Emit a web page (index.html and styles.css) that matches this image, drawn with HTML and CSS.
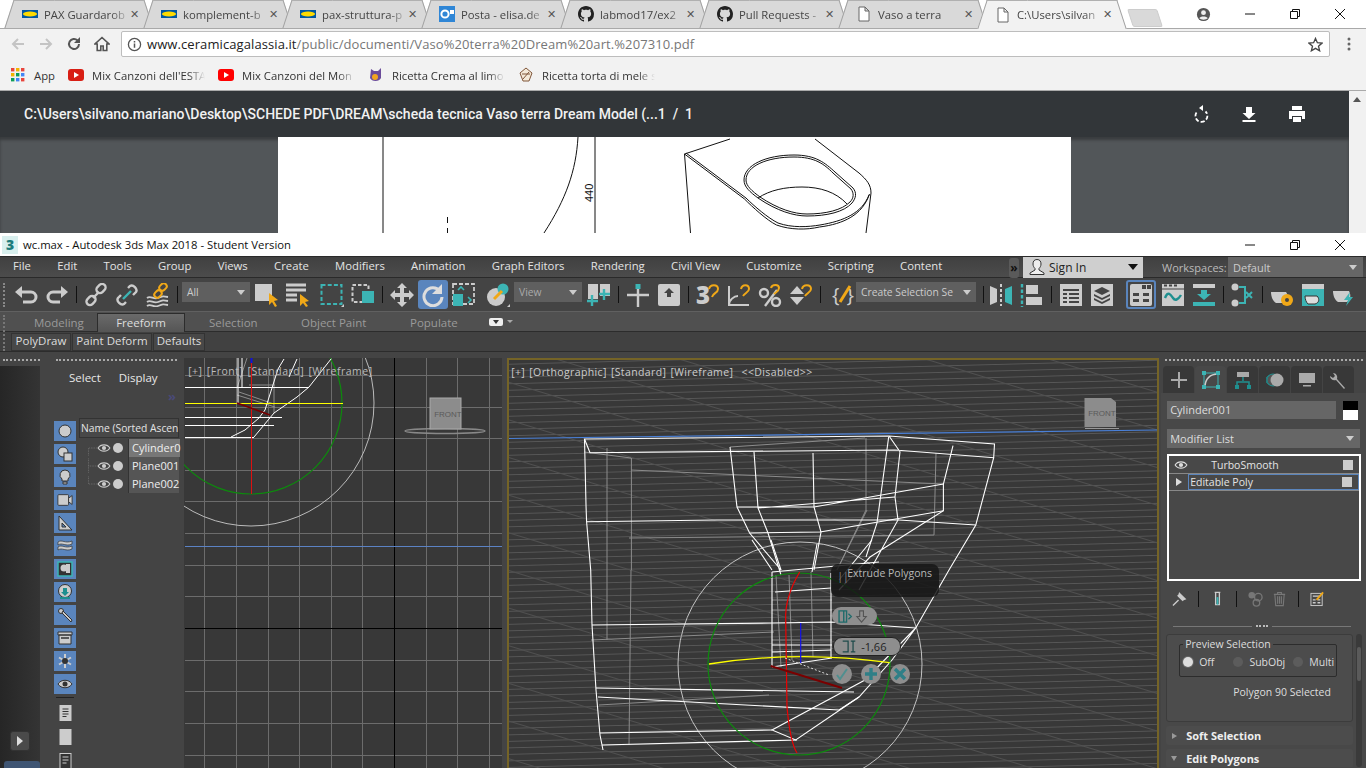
FILE: index.html
```html
<!DOCTYPE html>
<html lang="it">
<head>
<meta charset="utf-8">
<title>wc.max - Autodesk 3ds Max 2018</title>
<link rel="stylesheet" href="styles.css">
</head>
<body>
<section class="chrome">
  <div class="tabstrip">
    <div class="tab"><svg class="fav" viewBox="0 0 16 8"><rect width="16" height="8" y="0" fill="#0058a3"/><ellipse cx="8" cy="4" rx="7" ry="2.6" fill="#ffdb00"/></svg><span class="tab-title">PAX Guardarob</span><span class="x">✕</span></div>
    <div class="tab"><svg class="fav" viewBox="0 0 16 8"><rect width="16" height="8" fill="#0058a3"/><ellipse cx="8" cy="4" rx="7" ry="2.6" fill="#ffdb00"/></svg><span class="tab-title">komplement-b</span><span class="x">✕</span></div>
    <div class="tab"><svg class="fav" viewBox="0 0 16 8"><rect width="16" height="8" fill="#0058a3"/><ellipse cx="8" cy="4" rx="7" ry="2.6" fill="#ffdb00"/></svg><span class="tab-title">pax-struttura-p</span><span class="x">✕</span></div>
    <div class="tab"><svg class="fav fav-sq" viewBox="0 0 16 16"><rect width="16" height="16" fill="#2f86d6"/><circle cx="6" cy="8" r="3.6" fill="none" stroke="#fff" stroke-width="2"/><path d="M11 4h4v4h-4z" fill="#fff"/></svg><span class="tab-title">Posta - elisa.de</span><span class="x">✕</span></div>
    <div class="tab"><svg class="fav fav-sq" viewBox="0 0 16 16"><path fill="#222" d="M8 0C3.58 0 0 3.58 0 8c0 3.54 2.29 6.53 5.47 7.59.4.07.55-.17.55-.38 0-.19-.01-.82-.01-1.49-2.01.37-2.53-.49-2.69-.94-.09-.23-.48-.94-.82-1.13-.28-.15-.68-.52-.01-.53.63-.01 1.08.58 1.23.82.72 1.21 1.87.87 2.33.66.07-.52.28-.87.51-1.07-1.78-.2-3.64-.89-3.64-3.95 0-.87.31-1.59.82-2.15-.08-.2-.36-1.02.08-2.12 0 0 .67-.21 2.2.82.64-.18 1.32-.27 2-.27.68 0 1.36.09 2 .27 1.53-1.04 2.2-.82 2.2-.82.44 1.1.16 1.92.08 2.12.51.56.82 1.27.82 2.15 0 3.07-1.87 3.75-3.65 3.95.29.25.54.73.54 1.48 0 1.07-.01 1.93-.01 2.2 0 .21.15.46.55.38A8.013 8.013 0 0016 8c0-4.42-3.58-8-8-8z"/></svg><span class="tab-title">labmod17/ex2</span><span class="x">✕</span></div>
    <div class="tab"><svg class="fav fav-sq" viewBox="0 0 16 16"><path fill="#222" d="M8 0C3.58 0 0 3.58 0 8c0 3.54 2.29 6.53 5.47 7.59.4.07.55-.17.55-.38 0-.19-.01-.82-.01-1.49-2.01.37-2.53-.49-2.69-.94-.09-.23-.48-.94-.82-1.13-.28-.15-.68-.52-.01-.53.63-.01 1.08.58 1.23.82.72 1.21 1.87.87 2.33.66.07-.52.28-.87.51-1.07-1.78-.2-3.64-.89-3.64-3.95 0-.87.31-1.59.82-2.15-.08-.2-.36-1.02.08-2.12 0 0 .67-.21 2.2.82.64-.18 1.32-.27 2-.27.68 0 1.36.09 2 .27 1.53-1.04 2.2-.82 2.2-.82.44 1.1.16 1.92.08 2.12.51.56.82 1.27.82 2.15 0 3.07-1.87 3.75-3.65 3.95.29.25.54.73.54 1.48 0 1.07-.01 1.93-.01 2.2 0 .21.15.46.55.38A8.013 8.013 0 0016 8c0-4.42-3.58-8-8-8z"/></svg><span class="tab-title">Pull Requests -</span><span class="x">✕</span></div>
    <div class="tab"><svg class="fav fav-sq" viewBox="0 0 16 16"><path d="M3 1h6l4 4v10H3zM9 1v4h4" fill="#fff" stroke="#666"/></svg><span class="tab-title">Vaso a terra</span><span class="x">✕</span></div>
    <div class="tab tab-active"><svg class="fav fav-sq" viewBox="0 0 16 16"><path d="M3 1h6l4 4v10H3zM9 1v4h4" fill="#fff" stroke="#666"/></svg><span class="tab-title">C:\Users\silvan</span><span class="x">✕</span></div>
    <div class="newtab"></div>
    <div class="winctl">
      <svg class="profile" viewBox="0 0 16 16"><circle cx="8" cy="8" r="7" fill="#555"/><circle cx="8" cy="6" r="2.6" fill="#eee"/><path d="M3.5 12c1-2.4 8-2.4 9 0-2 2-7 2-9 0z" fill="#eee"/></svg>
      <svg viewBox="0 0 12 12"><path d="M1 6h10" stroke="#111"/></svg>
      <svg viewBox="0 0 12 12"><path d="M1.5 3.5h7v7h-7zM3.5 3.5v-2h7v7h-2" fill="none" stroke="#111"/></svg>
      <svg viewBox="0 0 12 12"><path d="M1 1l10 10M11 1L1 11" stroke="#111"/></svg>
    </div>
  </div>
  <div class="addr">
    <svg class="nav" viewBox="0 0 16 16"><path d="M14 8H3M8 3L3 8l5 5" fill="none" stroke="#c4c4c4" stroke-width="2"/></svg>
    <svg class="nav" viewBox="0 0 16 16"><path d="M2 8h11M8 3l5 5-5 5" fill="none" stroke="#c4c4c4" stroke-width="2"/></svg>
    <svg class="nav" viewBox="0 0 16 16"><path d="M13 8a5 5 0 1 1-1.5-3.6" fill="none" stroke="#555" stroke-width="2"/><path d="M14 1v6H8z" fill="#555"/></svg>
    <svg class="nav" viewBox="0 0 16 16"><path d="M8 1.5L1 8h2.2v6.5h3.6V10h2.4v4.5h3.6V8H15z" fill="none" stroke="#555" stroke-width="1.6"/></svg>
    <div class="omni">
      <svg class="info" viewBox="0 0 16 16"><circle cx="8" cy="8" r="6.5" fill="none" stroke="#555" stroke-width="1.4"/><path d="M8 7v4.5M8 4.2v1.6" stroke="#555" stroke-width="1.6"/></svg>
      <span class="url"><b>www.ceramicagalassia.it</b>/public/documenti/Vaso%20terra%20Dream%20art.%207310.pdf</span>
      <svg class="star" viewBox="0 0 16 16"><path d="M8 1.5l2 4.6 5 .4-3.8 3.3 1.2 4.9L8 12.1l-4.4 2.6 1.2-4.9L1 6.5l5-.4z" fill="none" stroke="#444" stroke-width="1.4"/></svg>
    </div>
    <svg class="menu" viewBox="0 0 4 16"><circle cx="2" cy="3" r="1.5" fill="#666"/><circle cx="2" cy="8" r="1.5" fill="#666"/><circle cx="2" cy="13" r="1.5" fill="#666"/></svg>
  </div>
  <div class="bookmarks">
    <div class="bm bm-app"><svg class="bm-ico-app" viewBox="0 0 14 14"><g><rect x="0" y="0" width="3.4" height="3.4" fill="#e8453c"/><rect x="5" y="0" width="3.4" height="3.4" fill="#f4b400"/><rect x="10" y="0" width="3.4" height="3.4" fill="#e8453c"/><rect x="0" y="5" width="3.4" height="3.4" fill="#f4b400"/><rect x="5" y="5" width="3.4" height="3.4" fill="#0f9d58"/><rect x="10" y="5" width="3.4" height="3.4" fill="#4285f4"/><rect x="0" y="10" width="3.4" height="3.4" fill="#0f9d58"/><rect x="5" y="10" width="3.4" height="3.4" fill="#4285f4"/><rect x="10" y="10" width="3.4" height="3.4" fill="#e8453c"/></g></svg><span>App</span></div>
    <div class="bm"><svg class="bm-ico" viewBox="0 0 16 12"><rect width="16" height="12" rx="3" fill="#d81e14"/><path d="M6 3l5 3-5 3z" fill="#fff"/></svg><span class="bm-t">Mix Canzoni dell'ESTA</span></div>
    <div class="bm"><svg class="bm-ico" viewBox="0 0 16 12"><rect width="16" height="12" rx="3" fill="#f00"/><path d="M6 3l5 3-5 3z" fill="#fff"/></svg><span class="bm-t">Mix Canzoni del Mon</span></div>
    <div class="bm"><svg class="bm-ico bm-tall" viewBox="0 0 16 16"><path d="M3 2l3 2h4l3-3v10a6 5 0 0 1-11 0z" fill="#6b4c9a"/><circle cx="7" cy="10" r="3" fill="#f2a51f"/></svg><span class="bm-t">Ricetta Crema al limo</span></div>
    <div class="bm"><svg class="bm-ico bm-tall" viewBox="0 0 16 16"><path d="M8 1L2 6l3 8h6l3-8z" fill="#f4e9d8" stroke="#80563a"/><path d="M5 12l6-7M4 7h8" stroke="#80563a"/></svg><span class="bm-t">Ricetta torta di mele s</span></div>
  </div>
  <div class="pdfwrap">
    <div class="pdfmain">
      <div class="pdfbar">
        <span class="pdf-name">C:\Users\silvano.mariano\Desktop\SCHEDE PDF\DREAM\scheda tecnica Vaso terra Dream Model (...</span>
        <span class="pdf-pg">1&nbsp;&nbsp;/&nbsp;&nbsp;1</span>
        <div class="pdf-tools">
          <svg viewBox="0 0 20 20"><path d="M5.5 8.5a6 6 0 1 0 9-1" fill="none" stroke="#fff" stroke-width="1.8" stroke-dasharray="4 2"/><path d="M12 1v6l-4-3z" fill="#fff"/></svg>
          <svg viewBox="0 0 20 20"><path d="M7 3h6v6h3.5L10 15 3.5 9H7z" fill="#fff"/><rect x="3.5" y="16" width="13" height="2" fill="#fff"/></svg>
          <svg viewBox="0 0 20 20"><path d="M5 2h10v4H5zM2 7h16v8h-3v-3H5v3H2zM6 13h8v5H6z" fill="#fff"/></svg>
        </div>
      </div>
      <div class="pdfarea">
        <div class="pdfpage">
          <svg class="draw" viewBox="278 137 793 96">
            <g fill="none" stroke="#111" stroke-width="1">
              <path d="M383 137v96M595 137v96M447.5 217v6M447.5 228v5"/>
              <path d="M578 137c-2 34-12 62-34 96"/>
              <path d="M730 139l-45.500 15M815 139l44 34c8 7 12 12 12 20l-5 40M684.500 154l6 79"/>
              <path d="M684.500 154l60 45c8 8 22 21 32 26 14 5 30 5 43 2 24-3 43-12 50-33"/>
              <path d="M686 153l60 45c8 8 22 20 32 25 14 5 30 4 42 2 24-4 42-12 49-30"/>
              <path d="M758 198c-8-6-14-11-14-18 0-15 22-25 50-25 22 0 31 8 41 17l18 16c4 5 3 10-1 15-8 9-25 13-45 13-13 0-30-5-49-18z"/>
              <path d="M760 197c-8-6-14-11-14-17 0-14 21-23 48-23 21 0 30 7 39 16l18 16c3 4 3 9-1 13-8 8-24 12-43 12-13 0-29-5-47-17z"/>
              <path d="M758 198c12-8 27-11 44-11 18 0 34 5 45 17"/>
            </g>
          </svg>
          <span class="dim440">440</span>
        </div>
      </div>
    </div>
    <div class="pdfscroll"><i></i></div>
  </div>
</section>

<section class="max">
  <div class="titlebar">
    <div class="maxlogo"><span>3</span></div>
    <span class="titletext">wc.max - Autodesk 3ds Max 2018 - Student Version</span>
    <div class="winctl winctl-max">
      <svg viewBox="0 0 12 12"><path d="M1 6h10" stroke="#111"/></svg>
      <svg viewBox="0 0 12 12"><path d="M1.5 3.5h7v7h-7zM3.5 3.5v-2h7v7h-2" fill="none" stroke="#111"/></svg>
      <svg viewBox="0 0 12 12"><path d="M1 1l10 10M11 1L1 11" stroke="#111"/></svg>
    </div>
  </div>

  <div class="menubar">
    <nav class="menus"><span>File</span><span>Edit</span><span>Tools</span><span>Group</span><span>Views</span><span>Create</span><span>Modifiers</span><span>Animation</span><span>Graph Editors</span><span>Rendering</span><span>Civil View</span><span>Customize</span><span>Scripting</span><span>Content</span></nav>
    <span class="more">»</span>
    <div class="signin">
      <svg viewBox="0 0 18 18"><path d="M9 1.5c-3 0-4 2-4 4.500 0 2 1 3.500 2 4.500v1.500L2 15v1.500h14V15l-5-3v-1.500c1-1 2-2.500 2-4.500 0-2.500-1-4.500-4-4.500z" fill="#eee" stroke="#333"/></svg>
      <span>Sign In</span><i class="caret"></i>
    </div>
    <span class="ws-label">Workspaces:</span>
    <div class="ws-drop"><span>Default</span><i class="caret caret-light"></i></div>
  </div>

  <div class="toolbar">
    <i class="vgrip"></i>
    <svg class="ti" viewBox="0 0 24 24"><path d="M7 9h10a5 5 0 0 1 0 10H9" fill="none" stroke="#ccc" stroke-width="3"/><path d="M8 3v12L1 9z" fill="#ccc"/></svg>
    <svg class="ti" viewBox="0 0 24 24"><path d="M17 9H8a5 5 0 0 0 0 10h7" fill="none" stroke="#ccc" stroke-width="3"/><path d="M16 3v12l7-6z" fill="#ccc"/></svg>
    <i class="sep"></i>
    <svg class="ti" viewBox="0 0 24 24"><g fill="none" stroke="#ccc" stroke-width="2.400"><rect x="12" y="2" width="10" height="7" rx="3.500" transform="rotate(-45 17 5.500)"/><rect x="2" y="14" width="10" height="7" rx="3.500" transform="rotate(-45 7 17.500)"/><path d="M9 15l6-6"/></g></svg>
    <svg class="ti" viewBox="0 0 24 24"><g fill="none" stroke="#ccc" stroke-width="2.400"><path d="M13 5l2-2c3-2 8 3 6 6l-3 3M11 19l-2 2c-3 2-8-3-6-6l3-3"/></g><path d="M8 16l8-8" stroke="#3cb4b4" stroke-width="2.400"/></svg>
    <svg class="ti" viewBox="0 0 24 24"><g fill="none" stroke="#ccc" stroke-width="1.800"><path d="M1 15c4-3 6 2 11 0s5-2 10-1M1 19c4-3 6 2 11 0s5-2 10-1M1 23c4-3 6 2 11 0s5-2 10-1"/></g><g fill="none" stroke="#f0a818" stroke-width="2"><rect x="13" y="1" width="8" height="6" rx="3" transform="rotate(-45 17 4)"/><rect x="8" y="8" width="8" height="6" rx="3" transform="rotate(-45 12 11)"/></g></svg>
    <i class="sep"></i>
    <div class="tdrop mn3 w68"><span>All</span><i class="caret caret-light"></i></div>
    <svg class="ti mn2" viewBox="0 0 24 24"><rect x="0" y="1" width="17" height="17" fill="#ccc"/><path d="M14 10l9 7-4 1 3 5-2 1-3-5-3 3z" fill="#f0a818"/></svg>
    <svg class="ti" viewBox="0 0 24 24"><path d="M0 2h20M0 7h20M0 12h11M0 17h11" stroke="#ccc" stroke-width="3"/><path d="M14 11l9 7-4 1 3 4-2 1-3-4-3 3z" fill="#f0a818"/></svg>
    <svg class="ti mp3" viewBox="0 0 24 24"><rect x="1.500" y="2" width="20" height="19" fill="none" stroke="#3cb4b4" stroke-width="2" stroke-dasharray="4 2.200"/><path d="M24 24h-3l3-3z" fill="#ccc"/></svg>
    <svg class="ti" viewBox="0 0 24 24"><rect x="1.500" y="2" width="16" height="17" fill="none" stroke="#ccc" stroke-width="2" stroke-dasharray="3.500 2"/><rect x="11" y="8" width="12" height="12" fill="#3cb4b4"/></svg>
    <i class="sep"></i>
    <svg class="ti" viewBox="0 0 24 24"><path d="M12 0l5 5h-3v5h5V7l5 5-5 5v-3h-5v5h3l-5 5-5-5h3v-5H5v3l-5-5 5-5v3h5V5H7z" fill="#ccc"/></svg>
    <div class="tactive mn3"><svg viewBox="0 0 24 24"><path d="M19 8a9 9 0 1 0 2 6" fill="none" stroke="#ddd" stroke-width="3"/><path d="M21 1v10H11z" fill="#ddd"/></svg></div>
    <svg class="ti mn3" viewBox="0 0 24 24"><rect x="1" y="1" width="21" height="20" fill="none" stroke="#ccc" stroke-width="1.800" stroke-dasharray="4 2"/><rect x="1" y="11" width="10" height="12" fill="#3cb4b4"/><path d="M6 7l3-3 3 3M16 14l3 3-3 3" fill="none" stroke="#3cb4b4" stroke-width="1.600"/></svg>
    <svg class="ti mp3" viewBox="0 0 24 24"><circle cx="10" cy="14" r="9" fill="#ccc"/><circle cx="17" cy="6" r="5.500" fill="#3cb4b4"/><path d="M8 16l8-8" stroke="#f0a818" stroke-width="3"/><path d="M24 24h-3l3-3z" fill="#ccc"/></svg>
    <div class="tdrop mn3 w68 dim"><span>View</span><i class="caret caret-light"></i></div>
    <svg class="ti mn2" viewBox="0 0 24 24"><rect x="1" y="1" width="10" height="15" fill="#ccc"/><rect x="13" y="1" width="10" height="12" fill="#ccc"/><path d="M5 12v11M0 18h11M17 6v11M12 11h11" stroke="#3cb4b4" stroke-width="2.400"/></svg>
    <i class="sep"></i>
    <svg class="ti" viewBox="0 0 24 24"><rect x="9.500" y="1" width="5" height="5" fill="#3cb4b4"/><path d="M12 6v18M1 12h22" stroke="#ccc" stroke-width="2.400"/></svg>
    <svg class="ti" viewBox="0 0 24 24"><rect x="1" y="1" width="22" height="22" rx="2" fill="#ccc"/><path d="M12 5l5 5h-3v4h-4v-4H7z" fill="#444"/></svg>
    <i class="sep"></i>
    <div class="tglyph"><span class="snap3">3</span><svg class="glyph-over" viewBox="0 0 24 24"><path d="M13 6c1-5 9-5 9 0 0 4-5 4-6 8" fill="none" stroke="#f0a818" stroke-width="2"/></svg></div>
    <svg class="ti" viewBox="0 0 24 24"><path d="M2 3v19h20M2 22c0-5 5-9 9-9" fill="none" stroke="#ccc" stroke-width="2"/><path d="M14 6c1-5 8-5 8 0 0 3-4 4-6 7" fill="none" stroke="#f0a818" stroke-width="2"/></svg>
    <svg class="ti" viewBox="0 0 24 24"><circle cx="6" cy="10" r="4" fill="none" stroke="#ccc" stroke-width="2.400"/><circle cx="18" cy="19" r="4" fill="none" stroke="#ccc" stroke-width="2.400"/><path d="M7 23L19 7" stroke="#ccc" stroke-width="2.400"/><path d="M13 5c1-4 8-4 8 0 0 3-3 4-5 6" fill="none" stroke="#f0a818" stroke-width="2"/></svg>
    <svg class="ti" viewBox="0 0 24 24"><path d="M1 11L8 3l7 8zM1 14h14l-7 8z" fill="#ccc"/><path d="M13 6c1-5 9-5 9 0 0 3-4 4-6 7" fill="none" stroke="#f0a818" stroke-width="2"/></svg>
    <i class="sep"></i>
    <div class="tglyph mp4 w22 brace-wrap"><span class="brace">{</span><span class="brace">}</span><svg class="glyph-over" viewBox="0 0 24 24"><path d="M8 19L18 3" stroke="#f0a818" stroke-width="3"/></svg></div>
    <div class="tdrop mn5 w120"><span>Create Selection Se</span><i class="caret caret-light"></i></div>
    <i class="sep"></i>
    <svg class="ti mn2" viewBox="0 0 24 24"><path d="M1 3l7 3v13l-7 3z" fill="#ccc"/><path d="M23 3l-7 3v13l7 3z" fill="#3cb4b4"/><path d="M12 1v22" stroke="#ccc" stroke-width="2" stroke-dasharray="3 2"/></svg>
    <svg class="ti" viewBox="0 0 24 24"><path d="M2 1v23" stroke="#3cb4b4" stroke-width="2.400" stroke-dasharray="3.500 2"/><rect x="6" y="2" width="12" height="9" fill="#ccc"/><rect x="6" y="14" width="16" height="8" fill="#ccc"/></svg>
    <i class="sep"></i>
    <svg class="ti" viewBox="0 0 24 24"><rect x="1" y="1" width="22" height="22" fill="#ccc"/><path d="M4 6h16v2H4zM4 10h4v2H4zM10 10h10v2H10zM4 14h4v2H4zM10 14h10v2H10zM4 18h4v2H4zM10 18h10v2H10z" fill="#444"/></svg>
    <svg class="ti" viewBox="0 0 24 24"><rect x="1" y="1" width="22" height="22" fill="#ccc"/><path d="M12 4l8 4-8 4-8-4zM4 11l8 4 8-4v2l-8 4-8-4zM4 15l8 4 8-4v2l-8 4-8-4z" fill="#444"/></svg>
    <div class="tactive tactive-ring mp5"><svg viewBox="0 0 24 24"><rect x="1" y="1" width="22" height="22" rx="2" fill="#ccc"/><path d="M13 2h4v4h-4zM18 2h4v4h-4zM4 10h6v3H4zM14 10h6v3h-6zM4 16h6v3H4zM14 16h6v3h-6z" fill="#444"/></svg></div>
    <svg class="ti mn2" viewBox="0 0 24 24"><rect x="1" y="1" width="22" height="22" fill="#ccc"/><path d="M1 6h22" stroke="#444" stroke-width="1"/><path d="M3 2.500h3M8 2.500h3M13 2.500h3" stroke="#444" stroke-width="2"/><path d="M4 15c3-8 6-3 8 0s5 2 8-3" fill="none" stroke="#1f8f8f" stroke-width="2.400"/></svg>
    <svg class="ti" viewBox="0 0 24 24"><path d="M1 1h22v4H1zM1 19h22v4H1z" fill="#ccc"/><path d="M1 19h22v4H1z" fill="#3cb4b4"/><path d="M9 7h6v4h4l-7 6-7-6h4z" fill="#3cb4b4"/></svg>
    <i class="sep"></i>
    <svg class="ti" viewBox="0 0 24 24"><circle cx="4" cy="4" r="3.500" fill="#ccc"/><circle cx="4" cy="20" r="3.500" fill="#ccc"/><path d="M8 4h6v16H8M15 9l6 6M21 9l-6 6" fill="none" stroke="#3cb4b4" stroke-width="2"/></svg>
    <i class="sep"></i>
    <svg class="ti" viewBox="0 0 24 24"><path d="M1 9h15c3 4 2 9-2 11H6C3 18 1 14 1 9z" fill="#ccc"/><circle cx="17" cy="17" r="6" fill="#f0a818"/><circle cx="17" cy="17" r="2" fill="#444"/></svg>
    <svg class="ti" viewBox="0 0 24 24"><rect x="1" y="1" width="22" height="22" fill="#3cb4b4"/><rect x="1" y="1" width="22" height="5" fill="#ccc"/><path d="M4 13h12c3 3 2 7-2 8H7c-2-2-3-5-3-8z" fill="#ddd" stroke="#333"/></svg>
    <svg class="ti" viewBox="0 0 24 24"><path d="M1 8h16c2 4 2 8-2 11H6C3 17 1 13 1 8z" fill="#ccc"/><path d="M18 9l-6 8h4l-2 6 7-9h-4z" fill="#3cb4b4"/></svg>
  </div>

  <div class="ribbon-tabs">
    <span class="rt rt-1">Modeling</span>
    <span class="rt rt-active">Freeform</span>
    <span class="rt rt-3">Selection</span>
    <span class="rt rt-4">Object Paint</span>
    <span class="rt rt-5">Populate</span>
    <svg class="rt-ico" viewBox="0 0 16 8"><rect width="14" height="8" rx="2" fill="#eee"/><path d="M4 2h6l-3 4z" fill="#333"/></svg>
    <i class="rt-caret"></i>
  </div>
  <div class="ribbon-sub">
    <span class="rb rb1">PolyDraw</span><span class="rb rb2">Paint Deform</span><span class="rb rb3">Defaults</span>
  </div>

  <div class="main">
    <aside class="leftdark">
      <i class="grip grip-left"></i>
      <div class="left-fill">
        <button class="play" type="button"><i></i></button>
        <i class="left-tab"></i>
      </div>
    </aside>
    <aside class="explorer">
      <i class="grip grip-ex"></i>
      <div class="ex-tabs"><span>Select</span><span>Display</span></div>
      <div class="ex-more">»</div>
      <div class="ex-body">
        <div class="ex-btns">
          <i class="eb"><svg viewBox="0 0 16 16"><circle cx="8" cy="8" r="6" fill="#ccc" stroke="#333"/></svg></i>
          <i class="eb"><svg viewBox="0 0 16 16"><circle cx="6" cy="6" r="5" fill="#ccc" stroke="#333"/><rect x="7" y="7" width="8" height="8" fill="#ccc" stroke="#333"/></svg></i>
          <i class="eb"><svg viewBox="0 0 16 16"><path d="M8 1a5 5 0 0 1 3 9v2H5v-2A5 5 0 0 1 8 1zM6 13h4v2H6z" fill="#ccc" stroke="#333"/></svg></i>
          <i class="eb"><svg viewBox="0 0 18 16"><rect x="1" y="2" width="12" height="12" rx="1" fill="#ccc" stroke="#333"/><path d="M13 6l4-3v10l-4-3z" fill="#ccc" stroke="#333"/></svg></i>
          <i class="eb"><svg viewBox="0 0 16 16"><path d="M2 1l13 14H2z" fill="#ccc" stroke="#333"/><path d="M5 8l4 4H5z" fill="#5a85bd" stroke="#333"/></svg></i>
          <i class="eb"><svg viewBox="0 0 16 16"><path d="M1 4c4-3 7 2 14-1v3C9 9 5 4 1 7zM1 9c4-3 7 2 14-1v3c-6 3-10-2-14 1z" fill="#ccc" stroke="#333" stroke-width=".7"/></svg></i>
          <i class="eb"><svg viewBox="0 0 16 16"><rect x="1" y="1" width="14" height="14" fill="#333" stroke="#3cb4b4" stroke-width="1.500"/><circle cx="7" cy="7" r="3.500" fill="#ccc"/><rect x="9" y="3" width="4" height="9" fill="#ccc"/></svg></i>
          <i class="eb"><svg viewBox="0 0 16 16"><circle cx="8" cy="7" r="6.500" fill="#ccc" stroke="#333"/><path d="M6 4h4v4h2l-4 4-4-4h2z" fill="#1f8f8f"/><path d="M3 13h10v2H3z" fill="#1f8f8f"/></svg></i>
          <i class="eb"><svg viewBox="0 0 16 16"><circle cx="4" cy="4" r="2.500" fill="#ccc" stroke="#333"/><path d="M6 4l9 9-1 2-9-9z" fill="#ccc" stroke="#333"/></svg></i>
          <i class="eb"><svg viewBox="0 0 16 16"><path d="M1 2h14v3H1zM2 5h12v9H2z" fill="#ccc" stroke="#333"/><path d="M4 8h8" stroke="#333" stroke-width="1.500"/></svg></i>
          <i class="eb"><svg viewBox="0 0 16 16"><path d="M8 1v14M2 4.500l12 7M14 4.500l-12 7" stroke="#ccc" stroke-width="2"/><circle cx="8" cy="8" r="3" fill="#333"/></svg></i>
          <i class="eb"><svg viewBox="0 0 16 12"><path d="M1 6c3-5 11-5 14 0-3 5-11 5-14 0z" fill="#ccc" stroke="#333"/><circle cx="8" cy="6" r="2.500" fill="#333"/></svg></i>
          <hr class="eb-sep">
          <i class="eb eb-doc"><svg viewBox="0 0 12 16"><rect width="12" height="16" fill="#ccc"/><path d="M3 4h6M3 6.500h6M3 9h6M3 11.500h4" stroke="#333"/></svg></i>
          <i class="eb eb-doc"><svg viewBox="0 0 12 16"><rect width="12" height="16" fill="#ccc"/></svg></i>
          <i class="eb eb-doc"><svg viewBox="0 0 12 16"><rect x=".5" y=".5" width="11" height="15" fill="#333" stroke="#ccc"/><path d="M3 4h6M3 7h6M3 10h4" stroke="#ccc"/></svg></i>
        </div>
        <div class="ex-list">
          <div class="ex-head">Name (Sorted Ascen</div>
          <div class="ex-rows">
            <div class="ex-row"><svg class="tree" viewBox="0 0 12 18"><path d="M.5 18V9H12" fill="none" stroke="#777" stroke-dasharray="1 1"/></svg><svg class="eye" viewBox="0 0 16 12"><path d="M1 6c3-5 11-5 14 0-3 5-11 5-14 0z" fill="none" stroke="#ccc" stroke-width="1.400"/><circle cx="8" cy="6" r="2.500" fill="#ccc"/></svg><i class="dot"></i><span class="ex-name ex-sel">Cylinder0</span></div>
            <div class="ex-row"><svg class="tree" viewBox="0 0 12 18"><path d="M.5 0V18M.5 9H12" fill="none" stroke="#777" stroke-dasharray="1 1"/></svg><svg class="eye" viewBox="0 0 16 12"><path d="M1 6c3-5 11-5 14 0-3 5-11 5-14 0z" fill="none" stroke="#ccc" stroke-width="1.400"/><circle cx="8" cy="6" r="2.500" fill="#ccc"/></svg><i class="dot"></i><span class="ex-name">Plane001</span></div>
            <div class="ex-row"><svg class="tree" viewBox="0 0 12 18"><path d="M.5 0V9H12" fill="none" stroke="#777" stroke-dasharray="1 1"/></svg><svg class="eye" viewBox="0 0 16 12"><path d="M1 6c3-5 11-5 14 0-3 5-11 5-14 0z" fill="none" stroke="#ccc" stroke-width="1.400"/><circle cx="8" cy="6" r="2.500" fill="#ccc"/></svg><i class="dot"></i><span class="ex-name">Plane002</span></div>
          </div>
        </div>
      </div>
    </aside>

    <div class="vp vp-front">
      <svg class="vp-svg" viewBox="185 358 318 410">
        <path d="M205.5 358V768M237.5 358V768M269.5 358V768M300.5 358V768M332.5 358V768M363.5 358V768M427.5 358V768M458.5 358V768M490.5 358V768M186 375.5H503M186 407.5H503M186 438.5H503M186 470.5H503M186 501.5H503M186 533.5H503M186 565.5H503M186 596.5H503M186 660.5H503M186 691.5H503M186 723.5H503M186 755.5H503" fill="none" stroke="#6c6c6c"/>
        <path d="M395.5 358V768M186 628.5H503" stroke="#000"/>
        <path d="M186 546.5H503" stroke="#5b82c4"/>
        <g fill="none" stroke="#8c8c8c">
          <path d="M240 392l35 12M248 358l-10 30M275 375v38M238 395l38 12M250 385h26"/>
        </g>
        <circle cx="252" cy="403" r="123" fill="none" stroke="#bbb"/>
        <circle cx="252" cy="403" r="91" fill="none" stroke="#0d8a0d" stroke-width="1.200"/>
        <g fill="none" stroke="#fff">
          <path d="M186 387.5H310M186 417.5H283M186 425.5H275M186 437.5H255"/>
          <path d="M239 358v45M243 358v30"/>
          <path d="M332 359l-22 28-12 10-23 16-20 24M285 359l-6 10-13 41-6 8-14 12-14 7M298 359l-8 18"/>
        </g>
        <path d="M186 403.5H344" stroke="#ff0" stroke-width="1.200"/>
        <path d="M252.5 360V494" stroke="#d11"/>
        <path d="M238 403l33 12" stroke="#700" stroke-width="1.600"/>
        <path d="M252.5 358v5" stroke="#11d" stroke-width="2"/>
        <ellipse cx="446" cy="431" rx="40" ry="2.5" fill="none" stroke="#888" stroke-width="1.500"/>
        <rect x="431" y="398" width="31" height="31" fill="#8c8c8c" stroke="#aaa"/>
      </svg>
      <span class="vp-label">[+] [Front] [Standard] [Wireframe]</span>
      <span class="cube-label cube-f">FRONT</span>
    </div>

    <div class="vp vp-persp">
      <svg class="vp-svg" viewBox="510 360 648 408">
        <defs>
          <pattern id="gridA" width="40" height="6.5" patternUnits="userSpaceOnUse" patternTransform="rotate(-1.5)">
            <path d="M0 .5H40" stroke="#575757"/>
          </pattern>
          <pattern id="gridB" width="60" height="36" patternUnits="userSpaceOnUse" patternTransform="rotate(17)">
            <path d="M0 .5H60" stroke="#505050"/>
          </pattern>
        </defs>
        <rect x="510" y="360" width="648" height="408" fill="url(#gridA)"/>
        <rect x="510" y="360" width="648" height="408" fill="url(#gridB)"/>
        <path d="M510 438.5L1158 430" stroke="#4a80d8" stroke-width="1.200"/>
        <circle cx="801" cy="664" r="122" fill="none" stroke="#c4c4c4"/>
        <g fill="none" stroke="#8c8c8c">
          <path d="M608 448V570M632.4 458V570M632 470L944 484M630 538L935 535 937 453M867 438V510L838 570M585 452L632 458M731 447L866 438M608 570V640M632 570L630 745M868 510L838 570M592 640L775 632M600 705L770 695"/>
          <path d="M777 575l5 92M790 575l3 85M812 572l2 85M773 600h60M773 610h60M773 640h60"/>
        </g>
        <g fill="none" stroke="#fff" stroke-width="1.100">
          <path d="M585.5 439L890 436 995.5 444 994.7 457.7 896 450 591 452.7zM890 436L901 451.7M585.5 439L591 452.7"/>
          <path d="M585.5 439L587 505 587.6 521.7 591.7 570 593 625 597 690 601 735 604 750"/>
          <path d="M994.7 457.7L976.8 525 950 570 916.7 628 893 660 860 697 796.7 740 773 730 866 680 916.7 628"/>
          <path d="M587.6 521.7L717.5 520 900 520 976.8 525"/>
          <path d="M731 447L738 507 750.6 533 782 570M755 451.7L759 508 769 533 782 575M814 453L815 507 822 532 815 570M889.7 436.7L878 523 867 557M901 451.7L896 497 899 520 860 590M954 445.7L944.4 484V510.7L871 557 840 590"/>
          <path d="M738 507L815 507 944.4 484M750.6 533L821 532 944.4 510.7M759 508L896 497"/>
          <path d="M773 572V667M832 573V657M773 572L880 562M782 570L772 540M773 570L753 540M813 572L818 544M840 580L873 540"/>
          <path d="M776 592L832 588M773 645H833M773 652L832 650M773 667L833 658"/>
          <path d="M593 625L773 623 832 622 916.7 628M597 688L855 692M599 697L840 710 860 697M601 733L773 730M603 745L798 740"/>
        </g>
        <circle cx="800" cy="664" r="91" fill="none" stroke="#0d8a0d" stroke-width="1.200"/>
        <path d="M710 664Q800 650 890.7 662.7" fill="none" stroke="#ff0" stroke-width="1.300"/>
        <path d="M800.7 572C790 590 786 605 786.7 620L788 706.7C790 730 793 745 798 753" fill="none" stroke="#e00" stroke-width="1.200"/>
        <path d="M771.7 666L843 688" stroke="#7a0000" stroke-width="2"/>
        <path d="M801.7 623V663" stroke="#11e" stroke-width="1.200"/>
        <path d="M786 658L830 675" stroke="#ddd" stroke-dasharray="2 2"/>
        <path d="M1086 428.5H1120" stroke="#999"/>
        <path d="M1085.5 398H1112L1117 402V427H1085.5z" fill="#8c8c8c"/>
      </svg>
      <span class="vp-label vp-label-p">[+] [Orthographic] [Standard] [Wireframe]&nbsp;&nbsp;&lt;&lt;Disabled&gt;&gt;</span>
      <span class="cube-label cube-p">FRONT</span>
      <div class="tip"><span class="tip-ico">||</span><span>Extrude Polygons</span></div>
      <div class="pill pill-1"><svg viewBox="0 0 42 16"><path d="M4 2h8v12H4zM9 2v12M14 5l3 3-3 3" fill="none" stroke="#1f6b6b" stroke-width="1.500"/><path d="M26 2h4v6h3l-5 6-5-6h3z" fill="none" stroke="#555" stroke-width="1.200"/></svg></div>
      <div class="pill pill-2"><svg viewBox="0 0 20 16"><path d="M3 2h6v12H3M12 2h5M14.5 2v12M12 14h5" fill="none" stroke="#1f4b4b" stroke-width="1.400"/></svg><span>-1,66</span></div>
      <i class="cbtn c1"><svg viewBox="0 0 14 14"><path d="M2 8l3 4 7-10" fill="none" stroke="#4f8f8f" stroke-width="2"/></svg></i>
      <i class="cbtn c2"><svg viewBox="0 0 14 14"><path d="M7 1v12M1 7h12" stroke="#2f7f87" stroke-width="3.400"/></svg></i>
      <i class="cbtn c3"><svg viewBox="0 0 14 14"><path d="M2 2l10 10M12 2L2 12" stroke="#2f7f87" stroke-width="3.400"/></svg></i>
    </div>

    <aside class="cmd">
      <i class="grip grip-cmd"></i>
      <div class="cmd-tabs">
        <i class="ct"><svg viewBox="0 0 18 18"><path d="M9 1v16M1 9h16" stroke="#aaa" stroke-width="2"/></svg></i>
        <i class="ct ct-active"><svg viewBox="0 0 18 18"><rect x="2" y="2" width="14" height="14" fill="none" stroke="#3cb4b4"/><path d="M3 16c0-8 5-13 13-13" fill="none" stroke="#ccc" stroke-width="1.600"/><path d="M0 0h4v4H0zM14 0h4v4h-4zM0 14h4v4H0zM14 14h4v4h-4z" fill="#3cb4b4"/></svg></i>
        <i class="ct"><svg viewBox="0 0 18 18"><rect x="3" y="1" width="12" height="5" fill="#aaa"/><path d="M9 6v4M3 16v-5h12v5" fill="none" stroke="#1f9090" stroke-width="1.500"/><path d="M1 14h4v4H1zM13 14h4v4h-4z" fill="#1f9090"/></svg></i>
        <i class="ct"><svg viewBox="0 0 18 18"><circle cx="5" cy="9" r="5" fill="none" stroke="#1f9090"/><circle cx="7" cy="9" r="6" fill="#555" stroke="#1f9090"/><circle cx="11" cy="9" r="6.5" fill="#aaa"/></svg></i>
        <i class="ct"><svg viewBox="0 0 18 18"><rect x="1" y="2" width="16" height="10" fill="#aaa"/><path d="M5 14h8v1.5H5z" fill="#aaa"/></svg></i>
        <i class="ct"><svg viewBox="0 0 18 18"><path d="M15 17L7 8c1-3-1-6-4-6l2 3-2 2-3-2c0 3 3 5 6 4l8 9z" fill="#aaa"/></svg></i>
      </div>
      <div class="cmd-body">
        <div class="name-row">
          <div class="field name-field">Cylinder001</div>
          <div class="swatch"></div>
        </div>
        <div class="field mod-list"><span>Modifier List</span><i class="caret caret-light"></i></div>
        <div class="stack">
          <div class="st-row"><svg class="st-eye" viewBox="0 0 16 12"><path d="M1 6c3-5 11-5 14 0-3 5-11 5-14 0z" fill="none" stroke="#ddd" stroke-width="1.400"/><circle cx="8" cy="6" r="2.5" fill="#ddd"/></svg><span class="st-name st-ind">TurboSmooth</span><i class="st-box"></i></div>
          <div class="st-row"><i class="st-tri"></i><div class="st-sel"><span class="st-name">Editable Poly</span><i class="st-box"></i></div></div>
        </div>
        <div class="st-tools">
          <svg class="stt" viewBox="0 0 16 16"><path d="M1 15l6-6M6 4l6 6M8 2l6 6-3 1-4-4z" stroke="#ccc" fill="#ccc" stroke-width="1.500"/></svg>
          <i class="stsep"></i>
          <svg class="stt" viewBox="0 0 16 16"><path d="M5 1h6M6 1v13h4V1" fill="none" stroke="#ccc" stroke-width="1.400"/><rect x="7" y="6" width="2" height="8" fill="#3cb4b4"/></svg>
          <i class="stsep"></i>
          <svg class="stt st-dim" viewBox="0 0 16 16"><circle cx="4" cy="4" r="3.5" fill="#777"/><circle cx="11" cy="6" r="4" fill="none" stroke="#777" stroke-width="1.400"/><circle cx="9" cy="12" r="3.5" fill="none" stroke="#777" stroke-width="1.400"/></svg>
          <svg class="stt st-dim st-gap" viewBox="0 0 16 16"><path d="M2 3h12M6 3V1h4v2M3 3l1 12h8l1-12M6 5v8M10 5v8M8 5v8" fill="none" stroke="#777" stroke-width="1.200"/></svg>
          <i class="stsep"></i>
          <svg class="stt" viewBox="0 0 16 16"><rect x="1" y="2" width="12" height="13" fill="none" stroke="#ccc"/><path d="M3 5h8M3 9h3M8 9h3M3 12h3M8 12h3" stroke="#ccc" stroke-width="1.400"/><path d="M7 9l7-8" stroke="#f0a818" stroke-width="2"/></svg>
        </div>
        <div class="splitter"><i></i><b></b><i></i></div>
        <div class="rollouts">
          <div class="roll-col">
            <div class="roll-panel">
              <div class="group">
                <span class="legend">Preview Selection</span>
                <div class="radios">
                  <span class="radio on"><i></i>Off</span>
                  <span class="radio r2"><i></i>SubObj</span>
                  <span class="radio r3"><i></i>Multi</span>
                </div>
              </div>
              <div class="polyinfo">Polygon 90 Selected</div>
            </div>
            <div class="roll-head"><i class="tri-r"></i><strong>Soft Selection</strong></div>
            <div class="roll-head"><i class="tri-d"></i><strong>Edit Polygons</strong></div>
          </div>
          <div class="roll-scroll"><i></i></div>
        </div>
      </div>
    </aside>
  </div>
</section>
</body>
</html>
```

FILE: styles.css
```css
* { box-sizing: border-box; }
html, body { margin: 0; padding: 0; }
body { width: 1366px; height: 768px; overflow: hidden; background: #444; font-family: "Open Sans", "Noto Sans", sans-serif; font-size: 12px; }
i { display: block; font-style: normal; }
svg { display: block; flex: none; }

/* Browser */
.chrome { height: 233px; background: #fff; }
.tabstrip { height: 29px; display: flex; padding-left: 5px; border-bottom: 1px solid #a9a9a9; position: relative; }
.tab { width: 148px; height: 28px; margin-right: -9px; position: relative; display: flex; align-items: center; padding-left: 17px; color: #444; font-size: 11.3px; }
.tab::before, .tab::after { content: ""; position: absolute; top: 0; bottom: 0; width: 60%; background: #d9d9d9; border-top: 1px solid #b0b0b0; z-index: 0; }
.tab::before { left: 4px; transform: skewX(-18deg); border-left: 1px solid #a0a0a0; }
.tab::after { right: 4px; transform: skewX(18deg); border-right: 1px solid #a0a0a0; }
.tab > * { position: relative; z-index: 1; }
.tab-active { height: 29px; z-index: 3; }
.tab-active::before, .tab-active::after { background: #f2f2f2; }
.fav { width: 16px; height: 8px; }
.fav-sq { height: 16px; }
.tab-title { width: 86px; margin-left: 6px; white-space: nowrap; -webkit-mask-image: linear-gradient(to right, #000 78%, transparent 100%); mask-image: linear-gradient(to right, #000 78%, transparent 100%); }
.x { width: 12px; font-size: 11px; font-weight: 700; color: #555; font-family: "DejaVu Sans", sans-serif; }
.newtab { width: 30px; height: 18px; margin: 9px 0 0 13px; background: #d9d9d9; transform: skewX(18deg); border-radius: 2px; border: 1px solid #ccc; }
.winctl { margin-left: auto; display: flex; align-items: center; height: 28px; padding-right: 20px; }
.winctl svg { width: 12px; height: 12px; margin-left: 33px; }
.winctl .profile { width: 15px; height: 15px; margin-left: 0; }

.addr { height: 31px; background: #f2f2f2; display: flex; align-items: center; padding: 0 0 1px 10px; }
.nav { width: 16px; height: 16px; margin-right: 12px; }
.omni { width: 1209px; height: 26px; margin-left: -1px; background: #fff; border: 1px solid #bdbdbd; border-radius: 2px; display: flex; align-items: center; padding: 0 6px 0 5px; }
.info { width: 15px; height: 15px; }
.url { margin-left: 5px; font-size: 13px; color: #777; white-space: nowrap; flex: 1; letter-spacing: .09px; }
.url b { font-weight: 400; color: #222; }
.star { width: 15px; height: 15px; }
.menu { width: 4px; height: 16px; margin-left: 17px; }

.bookmarks { height: 31px; background: #f2f2f2; display: flex; align-items: center; padding-left: 11px; border-bottom: 1px solid #aaa; font-size: 11.3px; color: #333; }
.bm { display: flex; align-items: center; }
.bm-app { width: 57px; }
.bm-ico-app { width: 14px; height: 14px; margin-right: 9px; }
.bm-ico { width: 16px; height: 12px; margin-right: 8px; }
.bm-tall { height: 16px; }
.bm-t { width: 113px; margin-right: 13px; white-space: nowrap; -webkit-mask-image: linear-gradient(to right, #000 85%, transparent 100%); mask-image: linear-gradient(to right, #000 85%, transparent 100%); }

.pdfwrap { height: 142px; display: flex; }
.pdfmain { width: 1349px; }
.pdfscroll { width: 17px; background: #f1f1f1; padding: 6px 0 0 4px; }
.pdfscroll i { width: 0; height: 0; border: 4px solid transparent; border-bottom: 5px solid #555; border-top: 0; }
.pdfbar { height: 46px; background: #323639; color: #f1f1f1; display: flex; align-items: center; padding-left: 24px; font-family: Roboto, sans-serif; font-size: 14px; font-weight: 500; }
.pdf-name { white-space: nowrap; }
.pdf-pg { margin-left: 0; }
.pdf-tools { margin-left: auto; display: flex; gap: 28px; padding-right: 42px; }
.pdf-tools svg { width: 20px; height: 20px; }
.pdfarea { height: 96px; background: #525659; display: flex; padding-left: 278px; box-shadow: inset 0 3px 3px rgba(0,0,0,.3); }
.pdfpage { width: 793px; background: #fff; position: relative; }
.draw { width: 793px; height: 96px; }
.dim440 { position: absolute; left: 305px; top: 51px; font-size: 11px; font-family: "Liberation Sans", sans-serif; color: #111; transform: rotate(-90deg); transform-origin: left top; margin-top: 14px; }

/* Max */
.max { height: 535px; display: flex; flex-direction: column; background: #444; color: #ddd; }
.titlebar { height: 23px; background: #fff; color: #111; display: flex; align-items: center; padding-left: 2px; }
.maxlogo { width: 16px; height: 18px; margin-right: 5px; background: #d8efee; color: #1d7c7c; font-weight: 800; font-size: 14px; line-height: 18px; text-align: center; flex: none; }
.titletext { font-size: 11.3px; }
.winctl-max { height: 23px; padding-right: 20px; }

.menubar { height: 22px; display: flex; align-items: center; background: linear-gradient(#404040, #4c4c4c); border-top: 1px solid #2a2a2a; border-bottom: 1px solid #2a2a2a; position: relative; }
.menus { display: flex; gap: 26.3px; padding: 0 0 3px 13px; width: 1009px; font-size: 11.3px; color: #e4e4e4; white-space: nowrap; }
.more { width: 10px; height: 20px; margin-top: 1px; background: #5a5a5a; border-radius: 3px; color: #111; font-weight: 700; line-height: 19px; text-align: center; }
.signin { width: 120px; height: 21px; margin-left: 4px; background: #cfcfcf; color: #222; display: flex; align-items: center; padding-left: 5px; font-size: 12px; }
.signin svg { width: 18px; height: 18px; margin-right: 3px; }
.signin .caret { margin-left: auto; margin-right: 5px; border-top-color: #111; border-width: 6px 5px 0; }
.caret { width: 0; height: 0; border-style: solid; border-width: 5px 4px 0; border-color: #222 transparent transparent; }
.caret-light { border-top-color: #ccc; margin-left: auto; }
.ws-label { margin-left: 19px; width: 66px; font-size: 11px; color: #bbb; white-space: nowrap; }
.ws-drop { width: 135px; height: 20px; background: #666; color: #ccc; display: flex; align-items: center; padding: 0 6px 0 5px; font-size: 11px; }

.toolbar { height: 34px; display: flex; align-items: center; gap: 7px; padding-left: 3px; background: #444; border-bottom: 1px solid #606060; }
.vgrip { width: 2px; height: 24px; margin-right: 2px; border-left: 2px dotted #888; flex: none; }
.ti { width: 24px; height: 24px; }
.tglyph { width: 24px; height: 26px; position: relative; flex: none; display: flex; align-items: center; justify-content: space-between; color: #ccc; }
.glyph-over { position: absolute; left: 0; top: 1px; width: 24px; height: 24px; }
.snap3 { font-weight: 800; font-size: 24px; line-height: 26px; }
.brace { font-size: 20px; line-height: 26px; }
.sep { width: 1px; height: 17px; background: #111; flex: none; }
.tactive { width: 30px; height: 29px; background: #5a85bd; border-radius: 3px; padding: 3px; flex: none; }
.tactive svg { width: 24px; height: 24px; }
.tactive-ring { background: #444; border: 2px solid #5a85bd; padding: 1px; }
.tdrop { height: 20px; margin-bottom: 5px; background: #5f5f5f; color: #ccc; display: flex; align-items: center; padding: 0 5px 0 5px; font-size: 10.3px; flex: none; white-space: nowrap; }
.tdrop.dim { color: #aaa; }
.w68 { width: 68px; }
.w120 { width: 120px; }
.w22 { width: 22px; }
.mn2 { margin-left: -2px; }
.mn3 { margin-left: -3px; }
.mn5 { margin-left: -5px; }
.mp3 { margin-left: 3px; }
.mp4 { margin-left: 4px; }
.mp5 { margin-left: 5px; }

.ribbon-tabs { height: 20px; background: #505050; display: flex; align-items: center; padding-left: 9px; border-bottom: 1px solid #2c2c2c; font-size: 11.5px; color: #9a9a9a; position: relative; }
.ribbon-tabs::before { content: ""; position: absolute; left: 3px; top: 3px; height: 36px; border-left: 2px dotted #777; }
.rt { display: block; white-space: nowrap; padding-top: 2px; }
.rt-1 { margin-left: 25px; width: 63px; }
.rt-active { width: 88px; height: 19px; margin-top: 1px; padding-top: 0; background: linear-gradient(#6a6a6a, #555); border: 1px solid #2c2c2c; border-bottom: 0; color: #ddd; text-align: center; line-height: 17px; }
.rt-3 { margin-left: 24px; width: 92px; }
.rt-4 { width: 109px; }
.rt-5 { width: 79px; }
.rt-ico { width: 16px; height: 8px; }
.rt-caret { width: 0; height: 0; margin-left: 2px; border: 3px solid transparent; border-top: 3px solid #aaa; border-bottom: 0; }
.ribbon-sub { height: 20px; display: flex; align-items: center; padding-left: 11px; gap: 1px; background: #414141; border-bottom: 1px solid #2c2c2c; font-size: 11.5px; }
.rb { height: 18px; border: 1px solid #333; background: #484848; line-height: 14px; text-align: center; color: #ddd; }
.rb1 { width: 60px; }
.rb2 { width: 80px; }
.rb3 { width: 52px; }

.main { flex: 1; min-height: 0; display: flex; padding-top: 6px; background: #444; }
.grip { height: 2px; border-top: 2px dotted #aaa; flex: none; }
.grip-left { width: 37px; margin: 1px 0 5px 3px; }
.grip-ex { width: 121px; margin: 1px 0 0 16px; }
.grip-cmd { width: 198px; margin: -7px 0 5px 4px; }
.leftdark { width: 40px; display: flex; flex-direction: column; }
.left-fill { flex: 1; min-height: 0; background: linear-gradient(to right, #262626, #343434); position: relative; }
.play { position: absolute; left: 10px; top: 365px; width: 20px; height: 20px; background: #4a4a4a; border: 1px solid #333; border-radius: 3px; padding: 0 0 0 6px; }
.play i { width: 0; height: 0; border: 5px solid transparent; border-left: 6px solid #ddd; border-right: 0; }
.left-tab { position: absolute; left: 4px; right: 0; bottom: 0; height: 7px; background: #3f5573; border-radius: 3px 3px 0 0; }
.explorer { width: 145px; background: #444; }
.ex-tabs { display: flex; padding: 9px 0 0 29px; font-size: 11.5px; gap: 18px; height: 27px; color: #e8e8e8; }
.ex-more { height: 30px; padding: 0 0 0 128px; color: #4a4a78; font-weight: 700; font-size: 13px; line-height: 16px; }
.ex-body { display: flex; padding-left: 14px; }
.ex-btns { width: 25px; padding-top: 3px; }
.eb { width: 22px; height: 20px; margin-bottom: 3px; background: #5a85bd; display: flex; align-items: center; justify-content: center; }
.eb svg { width: 16px; height: 16px; }
.eb-sep { width: 18px; margin: 2px 0 5px 2px; border: 0; border-top: 1px solid #222; }
.eb-doc { background: transparent; margin-bottom: 4px; }
.eb-doc svg { width: 13px; height: 16px; }
.ex-list { width: 100px; }
.ex-head { height: 20px; border: 1px solid #333; background: #484848; font-size: 10.3px; line-height: 18px; padding-left: 1px; white-space: nowrap; color: #e4e4e4; }
.ex-rows { padding-top: 1px; }
.ex-row { height: 18px; display: flex; align-items: center; padding-left: 9px; }
.tree { width: 10px; height: 18px; }
.eye { width: 14px; height: 10px; margin-left: -1px; }
.dot { width: 10px; height: 10px; margin-left: 2px; border-radius: 50%; background: #ccc; flex: none; }
.ex-name { flex: 1; height: 18px; margin-left: 5px; padding-left: 3px; background: #555; font-size: 11px; line-height: 17px; white-space: nowrap; color: #eee; border-left: 1px solid #333; }
.ex-sel { background: #777; }

.vp { position: relative; flex: none; background: #383838; height: 410px; overflow: hidden; }
.vp-front { width: 318px; }
.vp-persp { width: 652px; margin-left: 5px; border: 2px solid #756427; border-bottom: 0; }
.vp-svg { width: 100%; height: 100%; }
.vp-front .vp-svg { width: 318px; height: 410px; }
.vp-persp .vp-svg { width: 648px; height: 408px; }
.vp-label { position: absolute; left: 4px; top: 6px; font-size: 10.5px; color: #bbb; white-space: nowrap; word-spacing: 1px; letter-spacing: .5px; }
.vp-label-p { color: #ccc; left: 2px; top: 5px; letter-spacing: .38px; }
.cube-label { position: absolute; font: 8px "Liberation Sans", sans-serif; color: #5a5a5a; }
.cube-f { left: 250px; top: 52px; }
.cube-p { left: 579px; top: 49px; }

.tip { position: absolute; left: 322px; top: 204px; width: 108px; height: 33px; background: rgba(22,22,22,.85); border-radius: 7px; color: #b8b8b8; font-size: 10.5px; display: flex; padding: 2px 0 0 6px; white-space: nowrap; }
.tip-ico { width: 10px; color: #888; margin-top: 3px; }
.pill { position: absolute; background: #8e8e8e; border-radius: 9px; display: flex; align-items: center; }
.pill-1 { left: 323px; top: 247px; width: 45px; height: 18px; padding-left: 3px; }
.pill-1 svg { width: 40px; height: 15px; }
.pill-2 { left: 324px; top: 277px; width: 68px; height: 19px; padding-left: 6px; border: 1px solid #222; color: #222; font-size: 11px; }
.pill-2 svg { width: 18px; height: 15px; margin-right: 3px; }
.cbtn { position: absolute; top: 304px; width: 20px; height: 20px; border-radius: 50%; background: #8e8e8e; padding: 3px; }
.cbtn svg { width: 14px; height: 14px; }
.c1 { left: 323px; }
.c2 { left: 352px; }
.c3 { left: 381px; }

.cmd { width: 206px; margin-left: 2px; background: #444; display: flex; flex-direction: column; height: 410px; padding-top: 8px; }
.cmd-tabs { display: flex; gap: 1px; padding-left: 2px; height: 27px; flex: none; }
.ct { width: 31px; height: 27px; background: #383838; border-radius: 4px 4px 0 0; display: flex; align-items: center; justify-content: center; }
.ct svg { width: 18px; height: 18px; }
.ct-active { background: #484848; }
.cmd-body { flex: 1; min-height: 0; background: #484848; padding: 7px 0 0 6px; }
.name-row { display: flex; align-items: center; height: 20px; }
.field { background: #666; font-size: 11px; color: #ddd; }
.name-field { width: 169px; height: 18px; padding-left: 3px; line-height: 17px; }
.swatch { width: 15px; height: 19px; margin-left: 7px; background: linear-gradient(#000 50%, #fff 50%); }
.mod-list { width: 193px; height: 19px; margin-top: 9px; display: flex; align-items: center; padding: 0 6px 0 3px; }
.stack { width: 194px; height: 127px; margin-top: 6px; border: 2px solid #fff; background: #484848; padding-top: 1px; }
.st-row { height: 17px; display: flex; align-items: center; border-bottom: 1px solid #888; padding-left: 5px; position: relative; font-size: 10.5px; color: #e4e4e4; }
.st-eye { width: 14px; height: 10px; }
.st-ind { margin-left: 23px; }
.st-box { width: 10px; height: 10px; background: #ccc; margin-left: auto; margin-right: 6px; }
.st-tri { width: 0; height: 0; border: 4px solid transparent; border-left: 6px solid #ddd; border-right: 0; margin-left: 2px; }
.st-sel { position: absolute; left: 19px; right: 0; top: 0; height: 16px; border: 1px solid #5a85bd; display: flex; align-items: center; padding-left: 1px; }
.st-sel .st-box { margin-right: 6px; }
.st-tools { display: flex; align-items: center; height: 18px; margin-top: 9px; padding-left: 5px; }
.stt { width: 15px; height: 16px; }
.stsep { width: 1px; height: 16px; background: #111; margin: 0 11px; flex: none; }
.st-gap { margin-left: 9px; }
.splitter { display: flex; align-items: center; margin-top: 13px; padding-left: 6px; height: 10px; width: 184px; }
.splitter i { flex: 1; height: 1px; background: #777; }
.splitter b { width: 12px; margin: 0 4px; border-top: 2px dotted #bbb; }
.rollouts { display: flex; margin-top: 3px; height: 133px; overflow: hidden; margin-left: -1px; }
.roll-col { width: 187px; }
.roll-panel { height: 88px; background: #4c4c4c; border: 1px solid #3c3c3c; border-radius: 3px; padding: 9px 0 0 12px; }
.group { width: 158px; height: 33px; border: 1px solid #2c2c2c; border-radius: 2px; position: relative; }
.legend { position: absolute; left: 3px; top: -8px; padding: 0 2px; background: #4c4c4c; font-size: 10.5px; white-space: nowrap; }
.radios { display: flex; padding: 10px 0 0 3px; font-size: 10.5px; }
.radio { display: flex; align-items: center; white-space: nowrap; }
.radio i { width: 10px; height: 10px; border-radius: 50%; background: #5c5c5c; margin-right: 6px; }
.radio.on i { background: #ddd; box-shadow: 0 0 0 1px #666; }
.r2 { margin-left: 19px; }
.r3 { margin-left: 8px; }
.polyinfo { margin: 8px 0 0 54px; font-size: 10.5px; white-space: nowrap; }
.roll-head { height: 19px; margin-top: 4px; background: #4c4c4c; border-radius: 3px; display: flex; align-items: center; padding-left: 6px; font-size: 11px; color: #eee; }
.roll-head strong { margin-left: 9px; font-weight: 700; }
.tri-r { width: 0; height: 0; border: 3px solid transparent; border-left: 5px solid #999; border-right: 0; }
.tri-d { width: 0; height: 0; border: 3px solid transparent; border-top: 5px solid #999; border-bottom: 0; margin-left: -1px; }
.roll-scroll { width: 6px; margin-left: 3px; background: #3a3a3a; border-radius: 3px; padding-top: 13px; }
.roll-scroll i { width: 4px; margin-left: 1px; height: 34px; background: #5a5a5a; border-radius: 2px; }
```
